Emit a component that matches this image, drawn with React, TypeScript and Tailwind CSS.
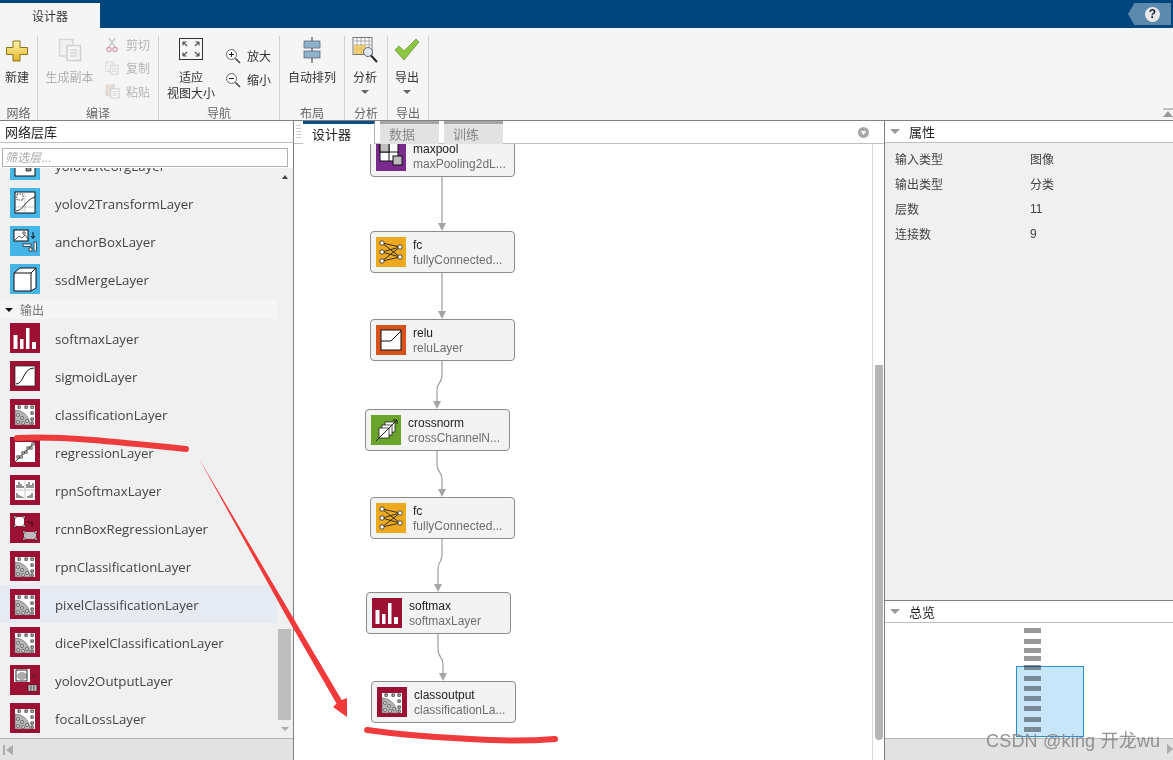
import React from 'react';

const CJK = '"Noto Sans CJK SC", sans-serif';

type LayerKind =
  | 'reorg' | 'transform' | 'anchor' | 'cube' | 'softmax' | 'sigmoid' | 'classification'
  | 'regression' | 'rpnSoftmax' | 'rcnn' | 'yolov2Output' | 'fc' | 'relu' | 'crossnorm' | 'maxpool';

const iconBg: Record<LayerKind, string> = {
  reorg: '#45b5e8', transform: '#45b5e8', anchor: '#45b5e8', cube: '#45b5e8',
  softmax: '#9c1034', sigmoid: '#9c1034', classification: '#9c1034', regression: '#9c1034',
  rpnSoftmax: '#9c1034', rcnn: '#9c1034', yolov2Output: '#9c1034',
  fc: '#eeaa1e', relu: '#d8521e', crossnorm: '#6ba42c', maxpool: '#7a2a8c',
};

const Scatter = () => (
  <>
    <rect x="5" y="6" width="20" height="20" fill="#fff" />
    <path d="M5 11 A 15 15 0 0 1 20 26 H5 Z" fill="#b5b5b5" stroke="#555" strokeWidth="0.5" />
    {[[9, 8], [16, 8], [22, 8], [22, 14], [22, 20], [22, 24]].map(([x, y]) => (
      <rect key={`${x}-${y}`} x={x - 1} y={y - 1} width="2.2" height="2.2" fill="#fff" stroke="#111" strokeWidth="0.8" />
    ))}
    {[[8, 16], [12, 19], [8, 23], [13, 24], [17, 22]].map(([x, y]) => (
      <circle key={`${x}-${y}`} cx={x} cy={y} r="1.6" fill="#ccc" stroke="#333" strokeWidth="0.5" />
    ))}
  </>
);

const LayerIcon: React.FC<{ kind: LayerKind }> = ({ kind }) => (
  <svg width="30" height="30" viewBox="0 0 30 30" className="shrink-0 block">
    <rect width="30" height="30" fill={iconBg[kind]} />
    {kind === 'reorg' && (
      <>
        <rect x="5" y="4" width="20" height="22" fill="#fff" stroke="#111" />
        <path d="M9 9h5v5H9zM16 16h5v5h-5z" fill="#888" stroke="#111" strokeWidth="0.7" />
      </>
    )}
    {kind === 'transform' && (
      <>
        <rect x="5" y="4" width="20" height="21" fill="#fff" stroke="#111" />
        <path d="M5 19h20M15 4v21" stroke="#aaa" strokeWidth="0.6" />
        <path d="M6 23C13 23 15 12 25 9" fill="none" stroke="#111" strokeWidth="0.9" />
        <rect x="7" y="6" width="6" height="6" fill="none" stroke="#111" strokeWidth="0.8" strokeDasharray="1.5 1" />
      </>
    )}
    {kind === 'anchor' && (
      <>
        <rect x="4" y="4" width="14" height="11" fill="#fff" stroke="#111" />
        <path d="M5 14l4-4 3 2 3-3 3 4" fill="none" stroke="#111" strokeWidth="0.7" />
        <circle cx="14" cy="7" r="1.3" fill="none" stroke="#111" strokeWidth="0.7" />
        <path d="M23 6v6M21 10l2 2.5 2-2.5" fill="none" stroke="#111" strokeWidth="1" />
        <rect x="13" y="18" width="8" height="2.5" fill="#fff" stroke="#111" strokeWidth="0.7" />
        <rect x="24" y="16" width="2.5" height="9" fill="#fff" stroke="#111" strokeWidth="0.7" />
        <rect x="19" y="22" width="3" height="3" fill="#fff" stroke="#111" strokeWidth="0.7" />
      </>
    )}
    {kind === 'cube' && (
      <path d="M4 9l6-5h16v20l-5 3H4zM4 9h17v18M21 9l5-5" fill="#fff" stroke="#111" strokeWidth="1" strokeLinejoin="round" />
    )}
    {kind === 'softmax' && (
      <g fill="#fff">
        <rect x="3.500" y="12" width="4" height="14" />
        <rect x="10" y="16" width="3.500" height="10" />
        <rect x="16" y="5" width="3.500" height="21" />
        <rect x="22" y="19" width="4" height="7" />
      </g>
    )}
    {kind === 'sigmoid' && (
      <>
        <rect x="5" y="5" width="20" height="20" fill="#fff" stroke="#222" strokeWidth="0.7" />
        <path d="M6 23C14 23 13 7 24 7" fill="none" stroke="#111" strokeWidth="1" />
      </>
    )}
    {kind === 'classification' && <Scatter />}
    {kind === 'regression' && (
      <>
        <rect x="5" y="5" width="20" height="20" fill="#fff" />
        <path d="M5 25L25 5" stroke="#111" strokeWidth="0.8" />
        {[[8, 20], [11, 20], [13, 16], [16, 15], [18, 11], [21, 11], [23, 7]].map(([x, y]) => (
          <rect key={`${x}-${y}`} x={x - 1.1} y={y - 1.1} width="2.2" height="2.2" fill="#fff" stroke="#111" strokeWidth="0.7" />
        ))}
      </>
    )}
    {kind === 'rpnSoftmax' && (
      <>
        <rect x="5" y="5" width="20" height="20" fill="#fff" />
        <path d="M5 15h20M15 5v20" stroke="#aaa" strokeWidth="0.6" />
        <path d="M7 13v-3M9 13v-6M11 13v-4M13 13v-2M17 13v-4M19 13v-6M21 13v-3M23 13v-5M7 23v-5M9 23v-3M11 23v-2M13 23v-1M18 23v-2M20 23v-3M22 23v-5" stroke="#111" strokeWidth="0.9" />
      </>
    )}
    {kind === 'rcnn' && (
      <>
        <rect x="5" y="4" width="9" height="9" fill="#fff" />
        <path d="M17 9h5v5" fill="none" stroke="#111" strokeWidth="0.8" />
        <rect x="14" y="19" width="12" height="7" fill="#bbb" />
        <g fill="#fff" stroke="#111" strokeWidth="0.5">
          <rect x="4" y="3" width="2" height="2" /><rect x="13" y="3" width="2" height="2" />
          <rect x="4" y="12" width="2" height="2" /><rect x="13" y="12" width="2" height="2" />
          <rect x="13" y="18" width="2" height="2" /><rect x="25" y="18" width="2" height="2" />
          <rect x="13" y="25" width="2" height="2" /><rect x="25" y="25" width="2" height="2" />
        </g>
      </>
    )}
    {kind === 'yolov2Output' && (
      <>
        <rect x="4" y="4" width="16" height="13" fill="#fff" />
        <ellipse cx="12" cy="11" rx="5" ry="4" fill="#aaa" />
        <rect x="6" y="5" width="11" height="11" fill="none" stroke="#111" strokeWidth="0.9" />
        <path d="M22 11h4M24 9v4" stroke="#333" strokeWidth="0.6" />
        <path d="M18 20h9v6h-9zM18 22h9M18 24h9M21 20v6M24 20v6" fill="#fff" stroke="#111" strokeWidth="0.6" />
      </>
    )}
    {kind === 'fc' && (
      <>
        <path d="M6 6L24 10M6 6L24 20M6 15L24 10M6 15L24 20M6 24L24 10M6 24L24 20" stroke="#222" strokeWidth="0.9" />
        {[[6, 6], [6, 15], [6, 24], [24, 10], [24, 20]].map(([x, y]) => (
          <circle key={`${x}-${y}`} cx={x} cy={y} r="2.2" fill="#fff" stroke="#222" strokeWidth="0.8" />
        ))}
      </>
    )}
    {kind === 'relu' && (
      <>
        <rect x="5" y="5" width="20" height="20" fill="#fff" stroke="#111" />
        <path d="M5 16h10L25 6" fill="none" stroke="#111" strokeWidth="1" />
      </>
    )}
    {kind === 'crossnorm' && (
      <>
        <rect x="14" y="7" width="10" height="10" fill="#fff" stroke="#111" strokeWidth="0.7" />
        <rect x="11" y="10" width="10" height="10" fill="#fff" stroke="#111" strokeWidth="0.7" />
        <rect x="8" y="13" width="10" height="10" fill="#fff" stroke="#111" strokeWidth="0.7" />
        <path d="M5 26L26 5M22 5h4v4" fill="none" stroke="#111" strokeWidth="0.9" />
      </>
    )}
    {kind === 'maxpool' && (
      <>
        <rect x="4" y="2" width="18" height="18" fill="#fff" stroke="#111" />
        <path d="M13 2v18M4 11h18" stroke="#111" />
        <rect x="4" y="2" width="9" height="9" fill="#bdbdbd" stroke="#111" />
        <rect x="17" y="15" width="9" height="9" fill="#bdbdbd" stroke="#111" />
      </>
    )}
  </svg>
);

const Magnifier: React.FC<{ plus?: boolean }> = ({ plus }) => (
  <svg width="16" height="16" viewBox="0 0 16 16">
    <circle cx="6.500" cy="6.500" r="5" fill="#fff" stroke="#666" strokeWidth="1" />
    <path d="M10.500 10.500L15 15" stroke="#444" strokeWidth="1.600" />
    <path d={plus ? 'M4 6.500h5M6.500 4v5' : 'M4 6.500h5'} stroke="#222" strokeWidth="1" />
  </svg>
);

const PageIcon: React.FC<{ size: number; paste?: boolean }> = ({ size, paste }) => (
  <svg width={size} height={size} viewBox="0 0 16 16" className="opacity-50">
    <rect x="1" y="1" width="9" height="11" fill={paste ? '#d8c8b8' : '#eee'} stroke="#bbb" />
    <rect x="6" y="5" width="9" height="10" fill="#f6f6f6" stroke="#aaa" />
    <path d="M8 8h5M8 10h5M8 12h5" stroke="#bbb" />
  </svg>
);

const RibbonGroup: React.FC<{ label: string; className: string; children: React.ReactNode }> = ({ label, className, children }) => (
  <div className={`flex flex-col h-[84px] mt-[8px] border-r border-[#d0d0d0] ${className}`}>
    <div className="h-[68px] shrink-0 flex">{children}</div>
    <div className="text-[12px] leading-[16px] text-[#666] text-center pt-[1px]">{label}</div>
  </div>
);

const BigButton: React.FC<{ icon: React.ReactNode; label: React.ReactNode; caret?: boolean; disabled?: boolean; className?: string }> = ({ icon, label, caret, disabled, className }) => (
  <div className={`flex flex-col items-center ${className ?? ''}`}>
    <div className="h-[28px] flex items-center justify-center">{icon}</div>
    <div className={`mt-[5px] text-[12px] leading-[16px] text-center whitespace-nowrap ${disabled ? 'text-[#b0b0b0]' : 'text-[#333]'}`}>{label}</div>
    {caret && <div className="mt-[5px] w-0 h-0 border-l-[4px] border-r-[4px] border-t-[4px] border-l-transparent border-r-transparent border-t-[#666]" />}
  </div>
);

const SmallButton: React.FC<{ icon: React.ReactNode; label: string; disabled?: boolean }> = ({ icon, label, disabled }) => (
  <div className="flex items-center h-[24px] gap-[6px]">
    <div className="w-[16px] flex justify-center">{icon}</div>
    <span className={`text-[12px] ${disabled ? 'text-[#b5b5b5]' : 'text-[#333]'}`}>{label}</span>
  </div>
);

const Ribbon = () => (
  <div className="h-[92px] bg-[#f5f5f5] flex">
    <RibbonGroup label="网络" className="w-[38px]">
      <BigButton
        className="w-[34px]"
        label="新建"
        icon={
          <svg width="24" height="24" viewBox="0 0 24 24" className="mt-[2px]">
            <defs>
              <linearGradient id="plus" x1="0" y1="0" x2="0" y2="1">
                <stop offset="0" stopColor="#fff6b0" />
                <stop offset="1" stopColor="#e2b520" />
              </linearGradient>
            </defs>
            <path d="M8 2h7v6.500h7.500v7H15V22H8v-6.500H1.500v-7H8z" fill="url(#plus)" stroke="#8a7420" strokeWidth="1" strokeLinejoin="round" />
          </svg>
        }
      />
    </RibbonGroup>
    <RibbonGroup label="编译" className="w-[121px]">
      <BigButton className="w-[63px]" disabled label="生成副本" icon={<PageIcon size={24} />} />
      <div className="ml-[3px] -mt-[3px] [&>div]:h-[23.5px]">
        <SmallButton
          disabled
          label="剪切"
          icon={
            <svg width="14" height="16" viewBox="0 0 14 16">
              <path d="M4 10L10 1M10 10L4 1" stroke="#bbb" strokeWidth="1.200" />
              <circle cx="4" cy="12.500" r="2.200" fill="none" stroke="#dd9aa8" strokeWidth="1.200" />
              <circle cx="10" cy="12.500" r="2.200" fill="none" stroke="#dd9aa8" strokeWidth="1.200" />
            </svg>
          }
        />
        <SmallButton disabled label="复制" icon={<PageIcon size={14} />} />
        <SmallButton disabled label="粘贴" icon={<PageIcon size={15} paste />} />
      </div>
    </RibbonGroup>
    <RibbonGroup label="导航" className="w-[121px]">
      <BigButton
        className="w-[64px]"
        label={<>适应<br />视图大小</>}
        icon={
          <svg width="24" height="24" viewBox="0 0 24 24">
            <rect x="0.500" y="0.500" width="23" height="21" fill="#f6f6f6" stroke="#333" />
            <path d="M4 4l4 4M4 4v3.500M4 4h3.500M20 4l-4 4M20 4v3.500M20 4h-3.500M4 18l4-4M4 18v-3.500M4 18h3.500M20 18l-4-4M20 18v-3.500M20 18h-3.500" fill="none" stroke="#555" strokeWidth="1.200" />
          </svg>
        }
      />
      <div className="mt-[8px] ml-[2px]">
        <SmallButton label="放大" icon={<Magnifier plus />} />
        <SmallButton label="缩小" icon={<Magnifier />} />
      </div>
    </RibbonGroup>
    <RibbonGroup label="布局" className="w-[65px]">
      <BigButton
        className="w-full"
        label="自动排列"
        icon={
          <svg width="20" height="26" viewBox="0 0 20 26">
            <path d="M10 0v26" stroke="#333" />
            <rect x="2" y="4" width="16" height="7" fill="#8fb2cc" stroke="#556" strokeWidth="0.7" />
            <rect x="2" y="14" width="16" height="7" fill="#8fb2cc" stroke="#556" strokeWidth="0.7" />
          </svg>
        }
      />
    </RibbonGroup>
    <RibbonGroup label="分析" className="w-[43px]">
      <BigButton
        className="w-[40px]"
        label="分析"
        caret
        icon={
          <svg width="26" height="26" viewBox="0 0 26 26">
            <rect x="1" y="0.500" width="19" height="17" fill="#fff" stroke="#777" />
            <path d="M2 4h17M2 8h17M2 12h17M5 1v16M9 1v16M13 1v16M17 1v16" stroke="#aaa" />
            <rect x="2" y="8" width="12" height="9" fill="#eec650" opacity="0.800" />
            <circle cx="16" cy="15" r="4.500" fill="#dfe8ee" stroke="#667" />
            <path d="M19 18.500L25 25" stroke="#222" strokeWidth="2" />
          </svg>
        }
      />
    </RibbonGroup>
    <RibbonGroup label="导出" className="w-[41px]">
      <BigButton
        className="w-[38px]"
        label="导出"
        caret
        icon={
          <svg width="26" height="24" viewBox="0 0 26 24">
            <path d="M1 12l4-4 5 5L22 1l3 3-15 18z" fill="#8cc63f" stroke="#6a9a3a" strokeWidth="0.8" strokeLinejoin="round" />
          </svg>
        }
      />
    </RibbonGroup>
    <div className="flex-1 relative">
      <svg width="10" height="10" viewBox="0 0 10 10" className="absolute right-0 bottom-[2px]">
        <path d="M0 1h10" stroke="#888" />
        <path d="M5 3l5 6H0z" fill="#999" />
      </svg>
    </div>
  </div>
);

const libraryRows: ({ name: string; kind: LayerKind; hover?: boolean } | { section: string })[] = [
  { name: 'yolov2ReorgLayer', kind: 'reorg' },
  { name: 'yolov2TransformLayer', kind: 'transform' },
  { name: 'anchorBoxLayer', kind: 'anchor' },
  { name: 'ssdMergeLayer', kind: 'cube' },
  { section: '输出' },
  { name: 'softmaxLayer', kind: 'softmax' },
  { name: 'sigmoidLayer', kind: 'sigmoid' },
  { name: 'classificationLayer', kind: 'classification' },
  { name: 'regressionLayer', kind: 'regression' },
  { name: 'rpnSoftmaxLayer', kind: 'rpnSoftmax' },
  { name: 'rcnnBoxRegressionLayer', kind: 'rcnn' },
  { name: 'rpnClassificationLayer', kind: 'classification' },
  { name: 'pixelClassificationLayer', kind: 'classification', hover: true },
  { name: 'dicePixelClassificationLayer', kind: 'classification' },
  { name: 'yolov2OutputLayer', kind: 'yolov2Output' },
  { name: 'focalLossLayer', kind: 'classification' },
];

const LibraryPanel = () => (
  <div className="w-[294px] shrink-0 border-r border-[#808080] flex flex-col bg-[#f0f0f0]">
    <div className="h-[22px] bg-white border-b border-[#c0c0c0] pl-[5px] text-[13px] leading-[22px] text-[#222]">网络层库</div>
    <div className="h-[25px] bg-white pl-[2px] pr-[5px] pt-[5px]">
      <div className="h-[19px] border border-[#b0b0b0] bg-white pl-[2px] text-[12px] leading-[16px] italic text-[#aaa]">筛选层...</div>
    </div>
    <div className="flex-1 flex min-h-0">
      <div className="w-[277px] overflow-hidden">
        <div className="-mt-[22px]">
          {libraryRows.map((row) =>
            'section' in row ? (
              <div key={row.section} className="h-[19px] mt-[2px] bg-[#f5f5f5] flex items-center pl-[5px] text-[12px] text-[#777]">
                <span className="w-0 h-0 mr-[7px] border-l-[4px] border-r-[4px] border-t-[4px] border-l-transparent border-r-transparent border-t-[#111]" />
                {row.section}
              </div>
            ) : (
              <div key={row.name} className={`h-[38px] flex items-center pl-[10px] ${row.hover ? 'bg-[#e6ebf3]' : ''}`}>
                <LayerIcon kind={row.kind} />
                <span className="ml-[15px] pt-[4px] text-[13.25px] text-[#444] whitespace-nowrap" style={{ fontFamily: '"Open Sans", sans-serif' }}>{row.name}</span>
              </div>
            ),
          )}
        </div>
      </div>
      <div className="flex-1 relative">
        <div className="absolute left-[5px] top-[7px] w-0 h-0 border-l-[3px] border-r-[3px] border-b-[4px] border-l-transparent border-r-transparent border-b-[#444]" />
        <div className="absolute left-[1px] right-[2px] top-[461px] h-[91px] bg-[#bdbdbd]" />
        <div className="absolute left-[4px] top-[559px] w-0 h-0 border-l-[4px] border-r-[4px] border-t-[4px] border-l-transparent border-r-transparent border-t-[#aaa]" />
      </div>
    </div>
    <div className="h-[22px] shrink-0 border-t border-[#b5b5b5] bg-[#e2e2e2] flex items-center pl-[3px]">
      <svg width="11" height="12" viewBox="0 0 11 12">
        <path d="M1 1v10" stroke="#999" strokeWidth="1.500" />
        <path d="M3 6l7-5v10z" fill="#aaa" />
      </svg>
    </div>
  </div>
);

const DocTab: React.FC<{ label: string; active?: boolean }> = ({ label, active }) => (
  <div className={`h-[23px] border-t-[3px] pl-[9px] text-[13px] leading-[19px] ${active ? 'w-[72px] border-[#0a4f8a] bg-white text-[#222] border-r border-r-[#b0b0b0]' : 'w-[59px] border-[#a5a5a5] bg-[#e2e2e2] text-[#888]'}`}>
    {label}
  </div>
);

const nodes: { name: string; type: string; kind: LayerKind; x: number; y: number }[] = [
  { name: 'maxpool', type: 'maxPooling2dL...', kind: 'maxpool', x: 76, y: -9 },
  { name: 'fc', type: 'fullyConnected...', kind: 'fc', x: 76, y: 87 },
  { name: 'relu', type: 'reluLayer', kind: 'relu', x: 76, y: 175 },
  { name: 'crossnorm', type: 'crossChannelN...', kind: 'crossnorm', x: 71, y: 265 },
  { name: 'fc', type: 'fullyConnected...', kind: 'fc', x: 76, y: 353 },
  { name: 'softmax', type: 'softmaxLayer', kind: 'softmax', x: 72, y: 448 },
  { name: 'classoutput', type: 'classificationLa...', kind: 'classification', x: 77, y: 537 },
];

const edges = [
  'M148 33V80',
  'M148 129V168',
  'M148 217V231C148 240 143 238 143 246V258',
  'M143 307V320C143 330 148 326 148 336V346',
  'M148 395V410C148 420 144 416 144 426V441',
  'M144 490V505C144 515 149 511 149 521V530',
];

const heads = [[148, 87], [148, 175], [143, 265], [148, 353], [144, 448], [149, 537]];

const Canvas = () => (
  <div className="flex-1 flex flex-col min-w-0 border-r border-[#808080]">
    <div className="h-[23px] shrink-0 bg-white border-b border-[#c0c0c0] flex pl-[2px] gap-[2px] relative">
      <div className="w-[5px] h-[13px] mt-[4px] bg-[repeating-linear-gradient(#cccccc_0_1px,transparent_1px_3px)]" />
      <div className="flex gap-[5px]">
        <DocTab label="设计器" active />
        <DocTab label="数据" />
        <DocTab label="训练" />
      </div>
      <svg width="11" height="11" viewBox="0 0 11 11" className="absolute right-[15px] top-[6px]">
        <circle cx="5.500" cy="5.500" r="5.500" fill="#a8a8a8" />
        <path d="M2.800 4h5.400L5.500 8z" fill="#fff" />
      </svg>
    </div>
    <div className="flex-1 relative overflow-hidden bg-white">
      <svg width="577" height="616" className="absolute left-0 top-0">
        {edges.map((d) => <path key={d} d={d} fill="none" stroke="#a5a5a5" strokeWidth="1.300" />)}
        {heads.map(([x, y]) => <path key={`${x}-${y}`} d={`M${x - 4} ${y - 8}h8l-4 8z`} fill="#a5a5a5" />)}
      </svg>
      {nodes.map((n) => (
        <div
          key={`${n.name}-${n.y}`}
          className="absolute w-[145px] h-[42px] rounded-[4px] border border-[#8c8c8c] bg-[#f3f3f3] flex items-center pl-[5px]"
          style={{ left: n.x, top: n.y, fontFamily: '"Liberation Sans", sans-serif' }}
        >
          <LayerIcon kind={n.kind} />
          <div className="ml-[7px] pt-[1px] flex flex-col text-[12px] leading-[15px] whitespace-nowrap">
            <span className="text-[#222]">{n.name}</span>
            <span className="text-[#6e6e6e]">{n.type}</span>
          </div>
        </div>
      ))}
      <div className="absolute right-0 top-0 bottom-0 w-[12px] border-l border-[#d8d8d8] bg-white">
        <div className="absolute left-[2px] right-[1px] top-[221px] h-[375px] rounded-b-[4px] bg-[#b5b5b5]" />
      </div>
    </div>
  </div>
);

const properties = [
  ['输入类型', '图像'],
  ['输出类型', '分类'],
  ['层数', '11'],
  ['连接数', '9'],
];

const overviewBars = [5, 16, 25, 33, 42, 53, 63, 73, 83, 94, 104];

const PanelHeader: React.FC<{ label: string }> = ({ label }) => (
  <div className="h-[22px] shrink-0 bg-white border-b border-[#c0c0c0] flex items-center pl-[5px]">
    <span className="w-0 h-0 mr-[9px] border-l-[5px] border-r-[5px] border-t-[5px] border-l-transparent border-r-transparent border-t-[#999]" />
    <span className="text-[13px] text-[#222]">{label}</span>
  </div>
);

const RightPanel = () => (
  <div className="w-[288px] shrink-0 flex flex-col bg-[#f0f0f0]">
    <PanelHeader label="属性" />
    <div className="h-[458px] shrink-0 pl-[10px] pt-[3px] border-b border-[#808080]">
      {properties.map(([key, value]) => (
        <div key={key} className="h-[25px] flex items-center text-[12px] text-[#444]">
          <span className="w-[135px]">{key}</span>
          <span style={{ fontFamily: /\d/.test(value) ? '"Liberation Sans", sans-serif' : undefined }}>{value}</span>
        </div>
      ))}
    </div>
    <PanelHeader label="总览" />
    <div className="flex-1 relative bg-white">
      <div className="absolute left-[131px] top-[43px] w-[68px] h-[71px] bg-[#c8e6fa] border border-[#2a8fcc]" />
      {overviewBars.map((y) => (
        <div key={y} className="absolute left-[139px] top-0 w-[17px] h-[5px] bg-[#999] mix-blend-multiply" style={{ transform: `translateY(${y}px)` }} />
      ))}
    </div>
    <div className="h-[22px] shrink-0 border-t border-[#b5b5b5] bg-[#e2e2e2] relative">
      <div className="absolute right-0 top-[5px] w-0 h-0 border-t-[5px] border-b-[5px] border-l-[6px] border-t-transparent border-b-transparent border-l-[#aaa]" />
    </div>
  </div>
);

export default function App() {
  return (
    <div className="relative w-[1173px] h-[760px] overflow-hidden flex flex-col bg-white" style={{ fontFamily: CJK }}>
      <div className="h-[28px] shrink-0 bg-[#00457c] flex items-end justify-between">
        <div className="w-[100px] h-[25px] bg-[#f5f5f5] text-[12px] leading-[25px] text-center text-[#333]">设计器</div>
        <div className="h-[22px] w-[43px] mr-[2px] mb-[3px] bg-[#5c8aad] flex items-center justify-center [clip-path:polygon(15%_0,100%_0,100%_100%,15%_100%,0_50%)]">
          <span className="w-[15px] h-[15px] ml-[6px] rounded-full bg-[#e8e8e8] text-[12px] leading-[15px] font-bold text-center text-[#123]" style={{ fontFamily: '"Liberation Sans", sans-serif' }}>?</span>
        </div>
      </div>
      <Ribbon />
      <div className="flex-1 min-h-0 flex border-t border-[#808080]">
        <LibraryPanel />
        <Canvas />
        <RightPanel />
      </div>

      {/* red annotation strokes and the watermark sit on top of the screenshot */}
      <svg width="1173" height="760" className="absolute left-0 top-0 pointer-events-none">
        <path d="M17 438C60 436 110 441 186 449" fill="none" stroke="#ee3b3b" strokeWidth="6" strokeLinecap="round" />
        <path d="M198 457L292.700 617L341.700 700L347 698L347 717L333 707L336.500 703.500L286.700 617Z" fill="#f23a3a" />
        <path d="M367 730C395 734 425 737 470 739C500 741 530 741 555 739" fill="none" stroke="#ee3b3b" strokeWidth="6" strokeLinecap="round" />
      </svg>
      <div className="absolute left-[986px] top-[729px] text-[18px] leading-[24px] tracking-[0.2px] text-[#888]/90 whitespace-nowrap" style={{ fontFamily: '"Liberation Sans", "Noto Sans CJK SC", sans-serif' }}>CSDN @king 开龙wu</div>
    </div>
  );
}
